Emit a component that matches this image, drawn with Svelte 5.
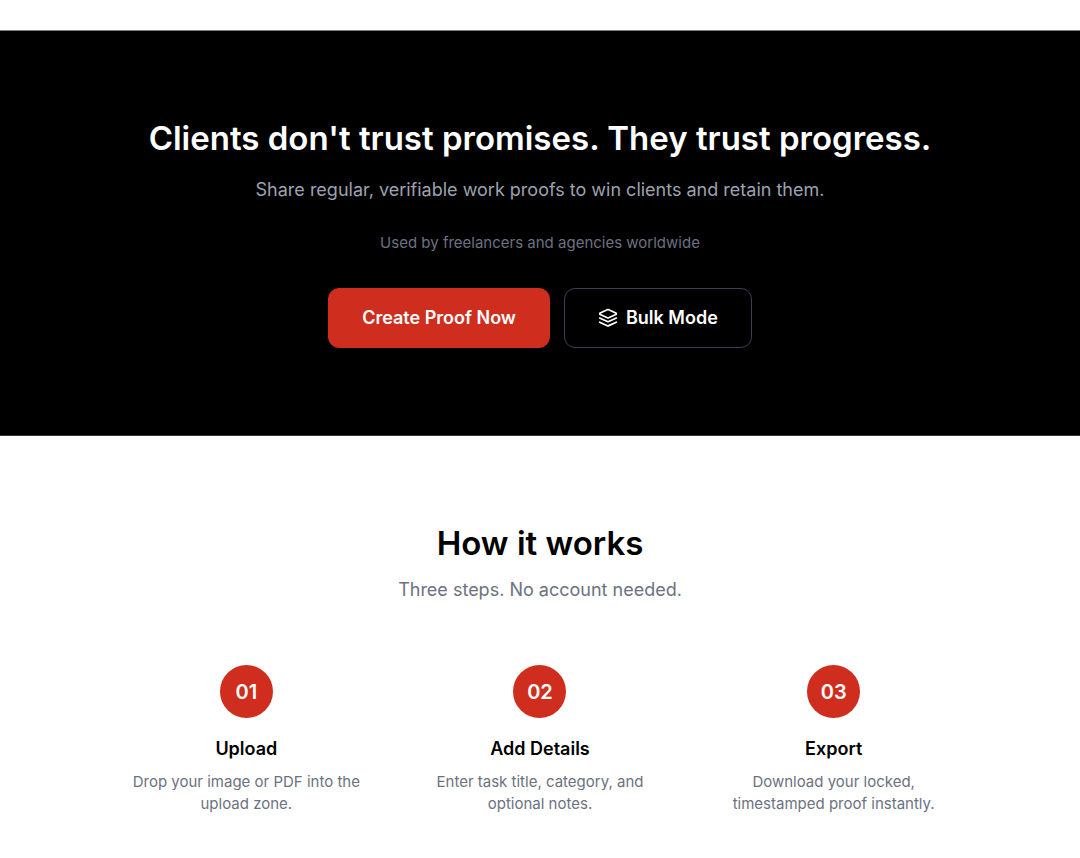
<script>
  const steps = [
    { number: '01', title: 'Upload', text: 'Drop your image or PDF into the upload zone.' },
    { number: '02', title: 'Add Details', text: 'Enter task title, category, and optional notes.' },
    { number: '03', title: 'Export', text: 'Download your locked, timestamped proof instantly.' },
  ];
</script>

<style>
  :global(body) {
    margin: 0;
    background: #fff;
    color: #000;
    font-family: Inter, 'Liberation Sans', sans-serif;
  }

  h2,
  h3,
  p {
    margin: 0;
  }

  main {
    padding-top: 30px;
  }

  .hero {
    padding: 87px 24px;
    border-top: 1px solid #808080;
    border-bottom: 1px solid #383838;
    background: #000;
    color: #fff;
    text-align: center;
  }

  h2 {
    font-size: 33px;
    line-height: 40px;
    font-weight: 600;
  }

  .lead {
    margin-top: 17px;
    font-size: 18px;
    line-height: 30px;
    color: #9ca3af;
  }

  .note {
    margin-top: 27px;
    font-size: 15px;
    line-height: 22px;
    color: #6b7280;
  }

  .actions {
    display: flex;
    flex-wrap: wrap;
    justify-content: center;
    gap: 14px;
    margin-top: 34px;
  }

  button {
    display: flex;
    align-items: center;
    gap: 8px;
    padding: 15px 33px;
    border: 1px solid #374151;
    border-radius: 11px;
    background: transparent;
    color: #fff;
    font-family: inherit;
    font-size: 18px;
    line-height: 28px;
    font-weight: 600;
    cursor: pointer;
  }

  .primary {
    border-color: #cf2e1e;
    background: #cf2e1e;
  }

  .how {
    padding: 87px 24px 40px;
    text-align: center;
  }

  .how .lead {
    margin-top: 12px;
    color: #6b7280;
  }

  .steps {
    display: grid;
    grid-template-columns: repeat(3, 1fr);
    gap: 53px;
    max-width: 828px;
    margin: 60px auto 0;
  }

  .number {
    display: flex;
    align-items: center;
    justify-content: center;
    width: 53px;
    height: 53px;
    margin: 0 auto 16px;
    border-radius: 50%;
    background: #cf2e1e;
    color: #fff;
    font-size: 20px;
    line-height: 30px;
    font-weight: 600;
  }

  h3 {
    font-size: 18px;
    line-height: 30px;
    font-weight: 600;
  }

  .steps p {
    margin-top: 7px;
    font-size: 15px;
    line-height: 22px;
    color: #6b7280;
  }
</style>

<main>
  <section class="hero">
    <h2>Clients don't trust promises. They trust progress.</h2>
    <p class="lead">Share regular, verifiable work proofs to win clients and retain them.</p>
    <p class="note">Used by freelancers and agencies worldwide</p>
    <div class="actions">
      <button class="primary">Create Proof Now</button>
      <button>
        <svg width="20" height="20" viewBox="0 0 24 24" fill="none" stroke="currentColor" stroke-width="2" stroke-linecap="round" stroke-linejoin="round" aria-hidden="true">
          <path d="m12.83 2.18a2 2 0 0 0-1.66 0L2.6 6.08a1 1 0 0 0 0 1.83l8.58 3.91a2 2 0 0 0 1.66 0l8.58-3.9a1 1 0 0 0 0-1.83Z" />
          <path d="m22 12-9.17 4.16a2 2 0 0 1-1.66 0L2 12" />
          <path d="m22 17-9.17 4.16a2 2 0 0 1-1.66 0L2 17" />
        </svg>
        Bulk Mode
      </button>
    </div>
  </section>

  <section class="how">
    <h2>How it works</h2>
    <p class="lead">Three steps. No account needed.</p>
    <div class="steps">
      {#each steps as step}
        <div>
          <div class="number">{step.number}</div>
          <h3>{step.title}</h3>
          <p>{step.text}</p>
        </div>
      {/each}
    </div>
  </section>
</main>
